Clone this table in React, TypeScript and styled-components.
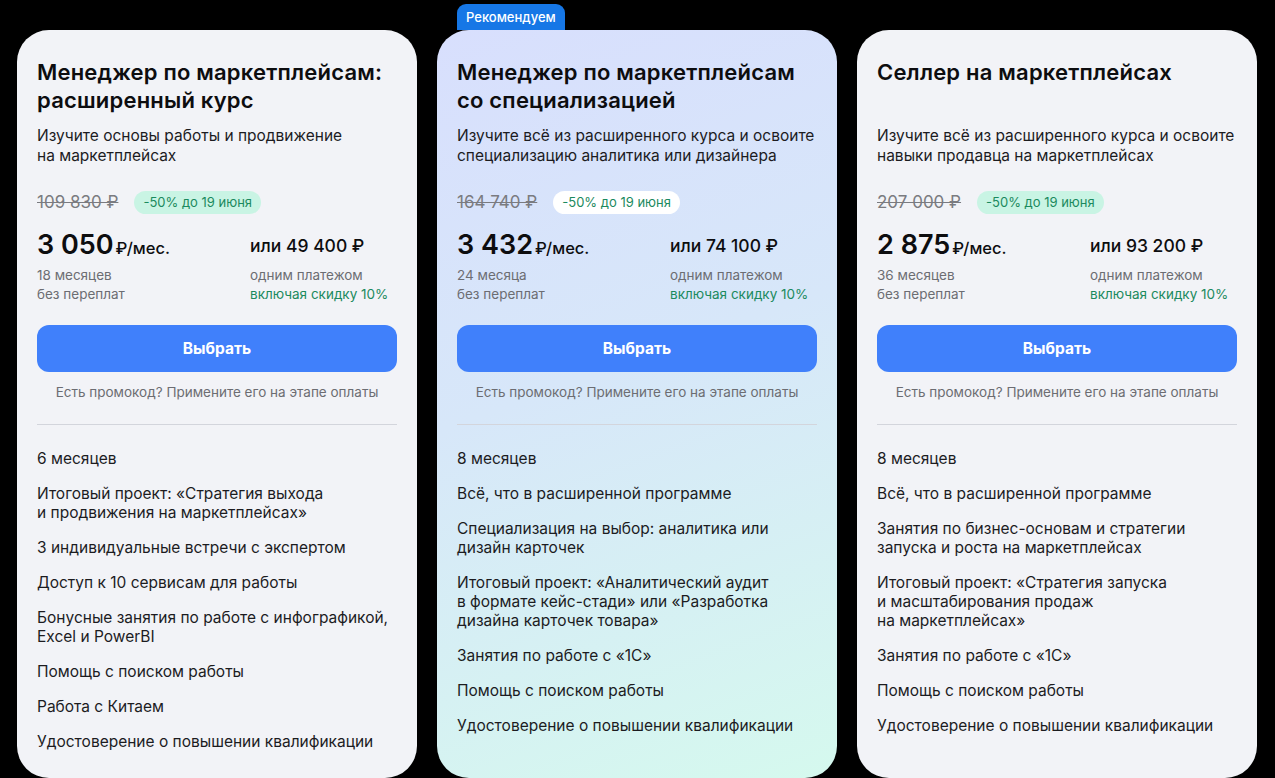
import React from "react";
import styled, { createGlobalStyle, css } from "styled-components";

const Global = createGlobalStyle`
  html, body { margin: 0; padding: 0; background: #000; }
  body { font-family: Inter, "Noto Sans", Arial, sans-serif; color: #0d0d0f; -webkit-font-smoothing: antialiased; }
  * { box-sizing: border-box; }
`;

const Page = styled.div`
  width: 1275px;
  height: 778px;
  overflow: hidden;
  background: #000;
  padding: 30px 0 0 17px;
`;

const Grid = styled.div`
  display: grid;
  grid-template-columns: repeat(3, 400px);
  gap: 20px;
  align-items: stretch;
`;

const Card = styled.div<{ $featured?: boolean }>`
  position: relative;
  border-radius: 32px;
  height: 748px;
  padding: 28px 20px 28px;
  display: flex;
  flex-direction: column;
  background: #f2f3f7;
  & > * {
    flex-shrink: 0;
  }
  ${(p) =>
    p.$featured &&
    css`
      background: linear-gradient(160deg, #d8dffd 0%, #d7e7f9 45%, #d5f9ee 100%);
    `}
`;

const Badge = styled.div`
  position: absolute;
  left: 20px;
  top: -26px;
  height: 26px;
  padding: 0 9px;
  display: flex;
  align-items: center;
  background: #1677e6;
  color: #fff;
  font-size: 13px;
  font-weight: 500;
  border-radius: 9px 9px 0 0;
`;

const Title = styled.h2`
  margin: 0;
  font-size: 22px;
  line-height: 28px;
  font-weight: 600;
  letter-spacing: 0.2px;
`;

const Desc = styled.p`
  margin: 12px 0 0;
  font-size: 15.5px;
  line-height: 20px;
  color: #1c1c1f;
`;

const OldRow = styled.div`
  margin-top: 24px;
  display: flex;
  align-items: center;
  gap: 16px;
  height: 24px;
`;

const OldPrice = styled.span`
  font-size: 17px;
  color: #7a7b80;
  text-decoration: line-through;
  text-decoration-thickness: 1px;
`;

const Pill = styled.span<{ $white?: boolean }>`
  height: 23px;
  padding: 0 9px;
  display: inline-flex;
  align-items: center;
  border-radius: 12px;
  font-size: 13px;
  color: #1b8a5e;
  background: ${(p) => (p.$white ? "#ffffff" : "#c9f4e4")};
`;

const PriceGrid = styled.div`
  margin-top: 15px;
  display: grid;
  grid-template-columns: 213px 1fr;
`;

const MainPrice = styled.div`
  display: flex;
  align-items: baseline;
  height: 32px;
  gap: 2px;
`;

const Big = styled.span`
  font-size: 27px;
  line-height: 32px;
  font-weight: 600;
`;

const Unit = styled.span`
  font-size: 16.5px;
  font-weight: 500;
`;

const Total = styled.div`
  height: 32px;
  display: flex;
  align-items: center;
  font-size: 17.5px;
  font-weight: 500;
`;

const Sub = styled.div`
  margin-top: 5px;
  font-size: 13.5px;
  line-height: 19px;
  color: #6c6d72;
`;

const Green = styled.span`
  color: #1b8a5e;
`;

const Button = styled.button`
  margin-top: 21px;
  height: 47px;
  width: 100%;
  border: none;
  border-radius: 12px;
  background: #4080fb;
  color: #fff;
  font-family: inherit;
  font-size: 15.5px;
  font-weight: 700;
  cursor: pointer;
`;

const Promo = styled.div`
  margin-top: 11px;
  text-align: center;
  font-size: 13.5px;
  line-height: 18px;
  color: #6c6d72;
`;

const Divider = styled.hr`
  margin: 23px 0 0;
  border: none;
  border-top: 1px solid #d3d5dc;
`;

const Features = styled.ul`
  list-style: none;
  margin: 24px 0 0;
  padding: 0;
  display: flex;
  flex-direction: column;
  gap: 16px;
`;

const Feature = styled.li`
  font-size: 15.5px;
  line-height: 19px;
  color: #1c1c1f;
`;

type Plan = {
  title: React.ReactNode;
  desc: React.ReactNode;
  old: string;
  monthly: string;
  total: string;
  term: string;
  features: React.ReactNode[];
  featured?: boolean;
};

const plans: Plan[] = [
  {
    title: (
      <>
        Менеджер по маркетплейсам:
        <br />
        расширенный курс
      </>
    ),
    desc: (
      <>
        Изучите основы работы и продвижение
        <br />
        на маркетплейсах
      </>
    ),
    old: "109 830 ₽",
    monthly: "3 050",
    total: "или 49 400 ₽",
    term: "18 месяцев",
    features: [
      "6 месяцев",
      <>
        Итоговый проект: «Стратегия выхода
        <br />и продвижения на маркетплейсах»
      </>,
      "3 индивидуальные встречи с экспертом",
      "Доступ к 10 сервисам для работы",
      <>
        Бонусные занятия по работе с инфографикой,
        <br />
        Excel и PowerBI
      </>,
      "Помощь с поиском работы",
      "Работа с Китаем",
      "Удостоверение о повышении квалификации",
    ],
  },
  {
    featured: true,
    title: (
      <>
        Менеджер по маркетплейсам
        <br />
        со специализацией
      </>
    ),
    desc: (
      <>
        Изучите всё из расширенного курса и освоите
        <br />
        специализацию аналитика или дизайнера
      </>
    ),
    old: "164 740 ₽",
    monthly: "3 432",
    total: "или 74 100 ₽",
    term: "24 месяца",
    features: [
      "8 месяцев",
      "Всё, что в расширенной программе",
      <>
        Специализация на выбор: аналитика или
        <br />
        дизайн карточек
      </>,
      <>
        Итоговый проект: «Аналитический аудит
        <br />в формате кейс-стади» или «Разработка
        <br />
        дизайна карточек товара»
      </>,
      "Занятия по работе с «1С»",
      "Помощь с поиском работы",
      "Удостоверение о повышении квалификации",
    ],
  },
  {
    title: <>Селлер на маркетплейсах</>,
    desc: (
      <>
        Изучите всё из расширенного курса и освоите
        <br />
        навыки продавца на маркетплейсах
      </>
    ),
    old: "207 000 ₽",
    monthly: "2 875",
    total: "или 93 200 ₽",
    term: "36 месяцев",
    features: [
      "8 месяцев",
      "Всё, что в расширенной программе",
      <>
        Занятия по бизнес-основам и стратегии
        <br />
        запуска и роста на маркетплейсах
      </>,
      <>
        Итоговый проект: «Стратегия запуска
        <br />и масштабирования продаж
        <br />
        на маркетплейсах»
      </>,
      "Занятия по работе с «1С»",
      "Помощь с поиском работы",
      "Удостоверение о повышении квалификации",
    ],
  },
];

const TitleBlock = styled.div`
  min-height: 56px;
`;

export default function App() {
  return (
    <>
      <Global />
      <Page>
        <Grid>
          {plans.map((p, i) => (
            <Card key={i} $featured={p.featured}>
              {p.featured && <Badge>Рекомендуем</Badge>}
              <TitleBlock>
                <Title>{p.title}</Title>
              </TitleBlock>
              <Desc>{p.desc}</Desc>
              <OldRow>
                <OldPrice>{p.old}</OldPrice>
                <Pill $white={p.featured}>-50% до 19 июня</Pill>
              </OldRow>
              <PriceGrid>
                <div>
                  <MainPrice>
                    <Big>{p.monthly}</Big>
                    <Unit>₽/мес.</Unit>
                  </MainPrice>
                  <Sub>
                    {p.term}
                    <br />
                    без переплат
                  </Sub>
                </div>
                <div>
                  <Total>{p.total}</Total>
                  <Sub>
                    одним платежом
                    <br />
                    <Green>включая скидку 10%</Green>
                  </Sub>
                </div>
              </PriceGrid>
              <Button>Выбрать</Button>
              <Promo>Есть промокод? Примените его на этапе оплаты</Promo>
              <Divider />
              <Features>
                {p.features.map((f, j) => (
                  <Feature key={j}>{f}</Feature>
                ))}
              </Features>
            </Card>
          ))}
        </Grid>
      </Page>
    </>
  );
}
